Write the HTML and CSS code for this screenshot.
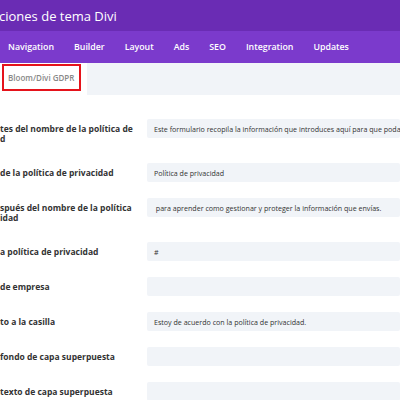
FILE: index.html
```html
<!DOCTYPE html>
<html lang="es">
<head>
  <meta charset="UTF-8" />
  <title>Opciones de tema Divi</title>
  <link rel="stylesheet" href="styles.css">
</head>
<body>
  <header class="title-bar">
    <h1 class="page-title">ciones de tema Divi</h1>
  </header>

  <nav class="main-tabs">
    <a href="#">Navigation</a>
    <a href="#">Builder</a>
    <a href="#">Layout</a>
    <a href="#">Ads</a>
    <a href="#">SEO</a>
    <a href="#">Integration</a>
    <a href="#">Updates</a>
  </nav>

  <div class="sub-tabs">
    <div class="sub-tab active"><span class="highlight">Bloom/Divi GDPR</span></div>
  </div>

  <main class="options">
    <div class="option-row">
      <label class="option-label">tes del nombre de la política de<br>d</label>
      <div class="option-field">Este formulario recopila la información que introduces aquí para que podamos</div>
    </div>
    <div class="option-row">
      <label class="option-label">de la política de privacidad</label>
      <div class="option-field">Política de privacidad</div>
    </div>
    <div class="option-row">
      <label class="option-label">spués del nombre de la política<br>idad</label>
      <div class="option-field">&nbsp;para aprender como gestionar y proteger la información que envías.</div>
    </div>
    <div class="option-row">
      <label class="option-label">a política de privacidad</label>
      <div class="option-field">#</div>
    </div>
    <div class="option-row">
      <label class="option-label">de empresa</label>
      <div class="option-field"></div>
    </div>
    <div class="option-row">
      <label class="option-label">to a la casilla</label>
      <div class="option-field">Estoy de acuerdo con la política de privacidad.</div>
    </div>
    <div class="option-row">
      <label class="option-label">fondo de capa superpuesta</label>
      <div class="option-field"></div>
    </div>
    <div class="option-row">
      <label class="option-label">texto de capa superpuesta</label>
      <div class="option-field"></div>
    </div>
  </main>
</body>
</html>
```

FILE: styles.css
```css
* {
  box-sizing: border-box;
}

body {
  margin: 0;
  font-family: 'Open Sans', 'Noto Sans', sans-serif;
  background-color: white;
  color: #333;
  overflow: hidden;
}

.title-bar {
  height: 31px;
  background-color: #6a2cb4;
  display: flex;
  align-items: center;
}

.page-title {
  margin: 0 0 0 -1px;
  font-size: 13px;
  font-weight: 400;
  color: white;
  white-space: nowrap;
}

.main-tabs {
  height: 32px;
  background-color: #7b3acc;
  display: flex;
  align-items: center;
  gap: 20px;
  padding-left: 8px;
}

.main-tabs a {
  color: white;
  text-decoration: none;
  font-size: 8.8px;
  font-weight: 600;
  white-space: nowrap;
}

.sub-tabs {
  height: 32px;
  background-color: #f1f4f8;
  display: flex;
}

.sub-tab {
  width: 87px;
  background-color: white;
  padding: 1px 0 4px 2px;
  display: flex;
}

.highlight {
  width: 79px;
  border: 2px solid #e5131b;
  font-size: 8px;
  font-weight: 600;
  color: #888;
  display: flex;
  align-items: center;
  padding-left: 4px;
  white-space: nowrap;
}

.options {
  padding-top: 24px;
  display: flex;
  flex-direction: column;
  gap: 16px;
}

.option-row {
  display: flex;
  align-items: flex-start;
}

.option-label {
  width: 147px;
  flex-shrink: 0;
  padding: 4.5px 0 3.5px;
  font-size: 8.5px;
  font-weight: 700;
  line-height: 10px;
  color: #333;
  white-space: nowrap;
}

.option-field {
  flex: 1;
  height: 19px;
  background-color: #f1f4f8;
  border-radius: 2px;
  font-size: 7.1px;
  color: #333;
  display: flex;
  align-items: center;
  padding-left: 7px;
  white-space: nowrap;
  overflow: hidden;
}
```
